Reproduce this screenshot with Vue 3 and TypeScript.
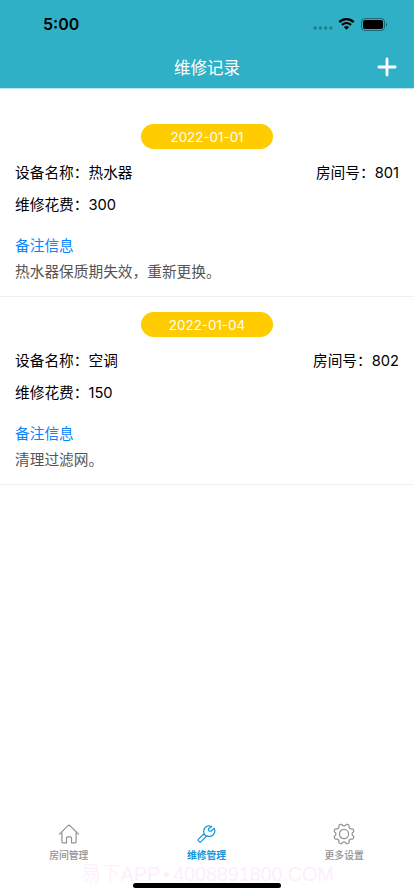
<script setup lang="ts">
interface RepairRecord {
  date: string
  device: string
  room: string
  cost: number
  note: string
}

const records: RepairRecord[] = [
  { date: '2022-01-01', device: '热水器', room: '801', cost: 300, note: '热水器保质期失效，重新更换。' },
  { date: '2022-01-04', device: '空调', room: '802', cost: 150, note: '清理过滤网。' },
]

// Outline of an eight-toothed gear with rounded teeth, centred on (12, 12).
function gearOutline(): string {
  const points: string[] = []
  const steps = 144
  for (let i = 0; i < steps; i++) {
    const angle = (i / steps) * Math.PI * 2
    const wave = Math.cos(8 * (angle + Math.PI / 8))
    const radius = 9.2 + 1.1 * Math.tanh(2 * wave)
    points.push(`${(12 + radius * Math.cos(angle)).toFixed(2)} ${(12 + radius * Math.sin(angle)).toFixed(2)}`)
  }
  return `M${points.join('L')}Z`
}

const gearPath = gearOutline()
</script>

<template>
  <div class="screen">
    <header class="header">
      <div class="status">
        <span class="clock">5:00</span>
        <div class="indicators">
          <svg class="signal" viewBox="0 0 20 4"><circle cx="2.2" cy="2" r="1.65" /><circle cx="7.4" cy="2" r="1.65" /><circle cx="12.6" cy="2" r="1.65" /><circle cx="17.8" cy="2" r="1.65" /></svg>
          <svg class="wifi" viewBox="0 0 17 12">
            <path d="M1.3 4.1C5.4.2 11.6.2 15.7 4.1" />
            <path d="M3.9 6.8c2.7-2.3 6.5-2.3 9.2 0" />
            <path class="dot" d="M5.8 9q2.7-2.1 5.4 0L8.5 11.8z" />
          </svg>
          <svg class="battery" viewBox="0 0 27 13">
            <rect class="shell" x=".5" y=".5" width="23" height="12" rx="3.4" />
            <rect x="2" y="2" width="20" height="9" rx="2" />
            <path class="tip" d="M25 4.5q1.8 2 0 4z" />
          </svg>
        </div>
      </div>
      <div class="nav">
        <h1 class="title">维修记录</h1>
        <button class="add" type="button" aria-label="添加">
          <svg viewBox="0 0 20 20"><path d="M10 1.9v16.2M1.9 10h16.2" /></svg>
        </button>
      </div>
    </header>

    <main class="list">
      <article v-for="item in records" :key="item.date" class="record">
        <div class="date">{{ item.date }}</div>
        <div class="row">
          <span>设备名称：{{ item.device }}</span>
          <span>房间号：{{ item.room }}</span>
        </div>
        <div class="row">维修花费：{{ item.cost }}</div>
        <div class="note-title">备注信息</div>
        <div class="note">{{ item.note }}</div>
      </article>
    </main>

    <nav class="tabs">
      <div class="tab">
        <svg viewBox="0 0 24 24"><path d="M2.500 12.200 11 3.700q1-.9 2 0l8.500 8.500M4.900 10.800v8.700q0 1.300 1.300 1.300h3.300v-5q0-1 1-1h3q1 0 1 1v5h3.300q1.300 0 1.300-1.300v-8.700" /></svg>
        <span>房间管理</span>
      </div>
      <div class="tab active">
        <svg viewBox="0 0 24 24"><path d="M16.700 4.500C11.500 2.400 7.300 7 9.200 11.500L3.300 17.400q-.6.600 0 1.200l1.300 1.300q.6.600 1.200 0l6-6c4.900 2.100 9.600-2.600 7.400-7.600l-3.100 2.900-2.300-.4-.4-2.100zM8.900 12l2.300 2.200" /></svg>
        <span>维修管理</span>
      </div>
      <div class="tab">
        <svg viewBox="0 0 24 24"><path :d="gearPath" /><circle cx="12" cy="12" r="4.600" /></svg>
        <span>更多设置</span>
      </div>
    </nav>
    <div class="watermark">易下APP • 4008891800.COM</div>
    <div class="home-bar"></div>
  </div>
</template>

<style>
body {
  background: #fff;
}
</style>

<style scoped>
.screen {
  position: relative;
  display: flex;
  flex-direction: column;
  width: 414px;
  height: 896px;
  overflow: hidden;
  background: #fff;
  color: #000;
  font-family: Inter, "Noto Sans CJK SC", sans-serif;
  font-size: 14.7px;
}
.header {
  flex: none;
  height: 88px;
  background: #30b0c7;
  border-bottom: 1px solid #bde5ec;
}
.status {
  display: flex;
  justify-content: space-between;
  align-items: center;
  height: 48px;
  padding: 0 26px 0 43px;
}
.clock {
  font-size: 16px;
  font-weight: 600;
}
.indicators {
  display: flex;
  align-items: center;
}
.signal {
  width: 20px;
  height: 4px;
  margin: 8px 5px 0 0;
  opacity: .3;
}
.wifi {
  width: 17px;
  height: 12px;
  margin-right: 6px;
  fill: none;
  stroke: #000;
  stroke-width: 2.2;
}
.wifi .dot {
  fill: #000;
  stroke: none;
}
.battery {
  width: 27px;
  height: 13px;
}
.battery .shell {
  fill: none;
  stroke: #000;
  opacity: .4;
}
.battery .tip {
  opacity: .5;
}
.nav {
  display: grid;
  grid-template-columns: 54px 1fr 54px;
  align-items: center;
  height: 38px;
}
.title {
  grid-column: 2;
  margin: 0;
  color: #fff;
  font-size: 16.5px;
  font-weight: 400;
  text-align: center;
}
.add {
  width: 20px;
  height: 20px;
  margin-left: 17px;
  padding: 0;
  border: 0;
  background: none;
}
.add svg {
  display: block;
  fill: none;
  stroke: #fff;
  stroke-width: 2.8;
  stroke-linecap: round;
}
.list {
  flex: 1;
  padding-top: 20px;
}
.record {
  box-sizing: border-box;
  height: 188px;
  padding: 15px 15px 0;
  border-bottom: 1px solid #f0f0f3;
}
.date {
  width: 132px;
  height: 25px;
  margin: 0 auto 8px;
  border-radius: 13px;
  background: #fc0;
  color: #fff;
  font-size: 13.4px;
  line-height: 26px;
  text-align: center;
}
.row {
  display: flex;
  justify-content: space-between;
  height: 32px;
  line-height: 32px;
}
.note-title {
  margin-top: 13px;
  color: #0a84ff;
  line-height: 25px;
}
.note {
  color: #555;
  line-height: 26px;
}
.tabs {
  display: flex;
  flex: none;
  height: 83px;
  padding-right: 1px;
}
.tab {
  display: flex;
  flex: 1;
  flex-direction: column;
  align-items: center;
  padding-top: 9px;
  color: #929292;
  font-size: 9.8px;
  font-weight: 500;
  line-height: 12px;
}
.tab svg {
  width: 24px;
  height: 24px;
  margin-bottom: 4px;
  fill: none;
  stroke: currentColor;
  stroke-width: 1.2;
  stroke-linecap: round;
  stroke-linejoin: round;
}
.active {
  color: #1296db;
}
.active span {
  font-weight: 700;
}
.watermark {
  position: absolute;
  top: 864px;
  left: 81px;
  color: #fdeefb;
  font-family: "Liberation Sans", "Noto Sans CJK SC", sans-serif;
  font-size: 20px;
  font-weight: 300;
  letter-spacing: -.2px;
  line-height: 20px;
  word-spacing: -2px;
  white-space: nowrap;
}
.home-bar {
  position: absolute;
  bottom: 8px;
  left: 133px;
  width: 148px;
  height: 5px;
  border-radius: 3px;
  background: #000;
}
</style>
